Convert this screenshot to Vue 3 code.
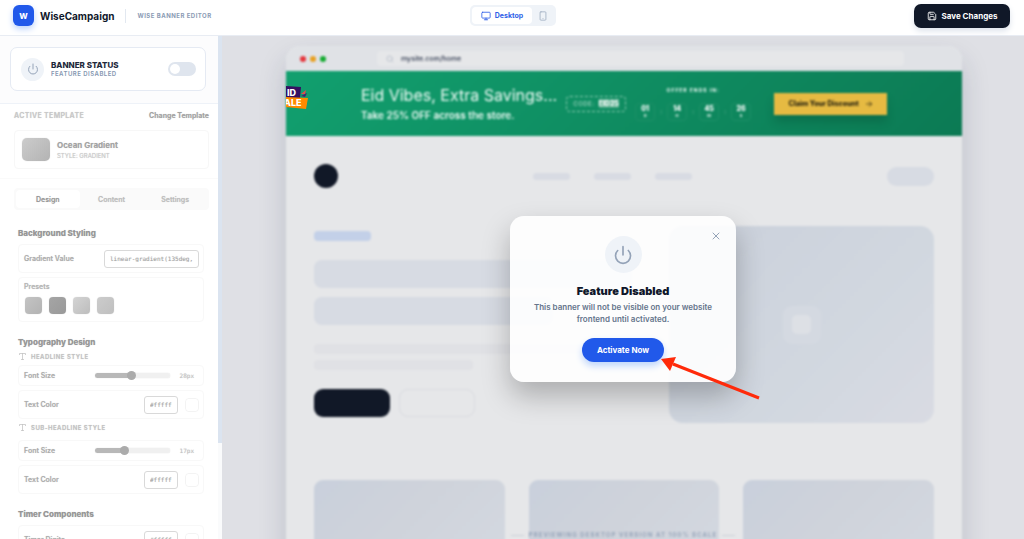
<script setup>
import { ref } from 'vue'

const enabled = ref(false)
const tab = ref('Design')
const tabs = ['Design', 'Content', 'Settings']
const gradient = ref('linear-gradient(135deg, #10b981, #047857)')
const presets = ['one', 'two', 'three', 'four']
const groups = ref([
  { id: 'headline', name: 'Headline Style', size: 28, percent: 48, color: '#ffffff' },
  { id: 'sub', name: 'Sub-headline Style', size: 17, percent: 38, color: '#ffffff' },
])
const digits = ref('#ffffff')
const timer = [
  { value: '01', unit: 'D' },
  { value: '14', unit: 'H' },
  { value: '45', unit: 'M' },
  { value: '26', unit: 'S' },
]
</script>

<template>
  <div class="app">
    <header class="topbar">
      <div class="brand">
        <span class="logo">W</span>
        <strong class="brand-name">WiseCampaign</strong>
        <span class="brand-sub">WISE BANNER EDITOR</span>
      </div>
      <div class="devices">
        <button class="device active" type="button">
          <svg viewBox="0 0 24 24" class="i10"><rect x="2" y="3" width="20" height="14" rx="2" /><path d="M8 21h8M12 17v4" /></svg>
          Desktop
        </button>
        <button class="device" type="button" aria-label="Mobile">
          <svg viewBox="0 0 24 24" class="i10"><rect x="5" y="2" width="14" height="20" rx="2" /><path d="M12 18h.01" /></svg>
        </button>
      </div>
      <button class="save" type="button">
        <svg viewBox="0 0 24 24" class="i10"><path d="M15.2 3a2 2 0 0 1 1.4.6l3.8 3.8a2 2 0 0 1 .6 1.4V19a2 2 0 0 1-2 2H5a2 2 0 0 1-2-2V5a2 2 0 0 1 2-2z" /><path d="M17 21v-7a1 1 0 0 0-1-1H8a1 1 0 0 0-1 1v7M7 3v4a1 1 0 0 0 1 1h7" /></svg>
        Save Changes
      </button>
    </header>

    <div class="workspace">
      <aside class="sidebar">
        <div class="sidebar-body">
          <section class="status-wrap">
            <div class="status">
              <span class="status-icon">
                <svg viewBox="0 0 24 24" class="i12"><path d="M12 2v10M18.4 6.6a9 9 0 1 1-12.77.04" /></svg>
              </span>
              <label class="status-text" for="status">
                <strong>BANNER STATUS</strong>
                <span>FEATURE DISABLED</span>
              </label>
              <input id="status" v-model="enabled" class="toggle" type="checkbox" />
            </div>
          </section>

          <div class="panel">
            <section class="template">
              <div class="template-head">
                <span class="caps">ACTIVE TEMPLATE</span>
                <button class="change" type="button">Change Template</button>
              </div>
              <div class="template-card">
                <span class="thumb"></span>
                <div class="template-info">
                  <strong>Ocean Gradient</strong>
                  <span>STYLE: GRADIENT</span>
                </div>
              </div>
            </section>

            <div class="tabs">
              <button v-for="t in tabs" :key="t" type="button" :class="{ active: t === tab }" @click="tab = t">{{ t }}</button>
            </div>

            <section class="group">
              <h3>Background Styling</h3>
              <div class="row tall first">
                <label for="gradient">Gradient Value</label>
                <input id="gradient" v-model="gradient" class="text wide" type="text" />
              </div>
              <div class="presets">
                <span>Presets</span>
                <div class="preset-list">
                  <button v-for="p in presets" :key="p" type="button" :class="['preset', p]" :aria-label="'Preset ' + p"></button>
                </div>
              </div>
            </section>

            <section class="group typography">
              <h3>Typography Design</h3>
              <div v-for="g in groups" :key="g.id" class="style-block">
                <h4>
                  <svg viewBox="0 0 24 24" class="i9"><path d="M4 7V4h16v3M9 20h6M12 4v16" /></svg>
                  {{ g.name }}
                </h4>
                <div class="row short">
                  <label :for="g.id + '-size'">Font Size</label>
                  <input :id="g.id + '-size'" v-model="g.percent" class="range" type="range" min="0" max="100" :style="{ '--fill': g.percent + '%' }" />
                  <output>{{ g.size }}px</output>
                </div>
                <div class="row tall">
                  <label :for="g.id + '-color'">Text Color</label>
                  <input :id="g.id + '-color'" v-model="g.color" class="text hex" type="text" />
                  <input v-model="g.color" class="swatch" type="color" :aria-label="g.name + ' color'" />
                </div>
              </div>
            </section>

            <section class="group typography">
              <h3>Timer Components</h3>
              <div class="row tall first">
                <label for="digits">Timer Digits</label>
                <input id="digits" v-model="digits" class="text hex" type="text" />
                <input v-model="digits" class="swatch" type="color" aria-label="Timer digits color" />
              </div>
            </section>
          </div>
        </div>
        <div class="scroll"><span></span></div>
      </aside>

      <main class="canvas">
        <div class="browser">
          <div class="frame">
            <div class="chrome">
              <i class="dot red"></i><i class="dot amber"></i><i class="dot green"></i>
              <div class="address">
                <svg viewBox="0 0 24 24" class="i8"><circle cx="11" cy="11" r="8" /><path d="m21 21-4.3-4.3" /></svg>
                mysite.com/home
              </div>
            </div>

            <div class="banner">
              <div class="copy">
                <div class="headline">Eid Vibes, Extra Savings...</div>
                <div class="subline">Take 25% OFF across the store.</div>
              </div>
              <div class="code">CODE: <b>EID25</b></div>
              <div class="countdown">
                <div class="ends">OFFER ENDS IN:</div>
                <div class="units">
                  <template v-for="(t, n) in timer" :key="t.unit">
                    <i v-if="n">:</i>
                    <div class="unit"><b>{{ t.value }}</b><span>{{ t.unit }}</span></div>
                  </template>
                </div>
              </div>
              <button class="claim" type="button">
                Claim Your Discount
                <svg viewBox="0 0 24 24" class="i8"><path d="M4 12h16M13 5l7 7-7 7" /></svg>
              </button>
            </div>

            <div class="site">
              <div class="site-nav">
                <span class="site-logo"></span>
                <div class="links"><i></i><i></i><i></i></div>
                <span class="site-cta"></span>
              </div>
              <div class="hero">
                <div class="hero-copy">
                  <span class="tag"></span>
                  <span class="bar"></span>
                  <span class="bar three-quarter"></span>
                  <span class="line"></span>
                  <span class="line half"></span>
                  <div class="hero-buttons"><span class="solid"></span><span class="outline"></span></div>
                </div>
                <div class="hero-image"><span><i></i></span></div>
              </div>
              <div class="cards"><span></span><span></span><span></span></div>
            </div>
          </div>

          <svg class="sticker" viewBox="0 0 24 30" role="img" aria-label="Eid sale">
            <path d="M0 1 15 2 14 13 0 13z" fill="#351062" />
            <path d="M0 12 22 13 20 24 0 22z" fill="#ff8a00" />
            <path d="m15 9 5-4-1 4z" fill="#e5484d" />
            <path d="m15 11 6-3-2 4z" fill="#4b1a72" />
            <text x="1" y="11">ID</text>
            <text x="-2" y="21">ALE</text>
          </svg>
        </div>

        <div class="caption"><span>PREVIEWING DESKTOP VERSION AT 100% SCALE</span></div>

        <div class="modal" role="dialog" aria-labelledby="modal-title">
          <button class="close" type="button" aria-label="Close">
            <svg viewBox="0 0 24 24" class="i12"><path d="M18 6 6 18M6 6l12 12" /></svg>
          </button>
          <span class="modal-icon">
            <svg viewBox="0 0 24 24" class="i20"><path d="M12 2v10M18.4 6.6a9 9 0 1 1-12.77.04" /></svg>
          </span>
          <h2 id="modal-title">Feature Disabled</h2>
          <p>This banner will not be visible on your website frontend until activated.</p>
          <button class="activate" type="button" @click="enabled = true">Activate Now</button>
          <svg class="arrow" viewBox="0 0 102 46"><path d="M99 41 13 7" stroke="#ff2a0a" stroke-width="3" stroke-linecap="butt" /><path d="M1 2 16 0 10 14z" fill="#ff2a0a" stroke="none" /></svg>
        </div>
      </main>
    </div>
  </div>
</template>

<style>
body { margin: 0; overflow: hidden; }
</style>

<style scoped>
.app { height: 100vh; display: flex; flex-direction: column; overflow: hidden; background: #fff; font-family: Inter, "Liberation Sans", sans-serif; color: #0f172a; }
.app *, .app *::before, .app *::after { box-sizing: border-box; }
button { border: 0; padding: 0; background: none; font: inherit; color: inherit; cursor: pointer; }
svg { fill: none; stroke: currentColor; stroke-width: 2; stroke-linecap: round; stroke-linejoin: round; flex: none; }
.i8 { width: 8px; height: 8px; }
.i9 { width: 9px; height: 9px; }
.i10 { width: 10px; height: 10px; }
.i12 { width: 12px; height: 12px; }
.i20 { width: 20px; height: 20px; }

.topbar { flex: none; height: 36px; padding: 0 14px 4px 16px; display: grid; grid-template-columns: 1fr auto 1fr; align-items: center; border-bottom: 1px solid #e8ecf3; }
.brand { display: flex; align-items: center; margin-left: -3px; }
.logo { width: 21px; height: 21px; border-radius: 6px; background: #2159ea; color: #fff; font-size: 8px; font-weight: 800; display: grid; place-items: center; box-shadow: 0 3px 6px #bcd3fb; }
.brand-name { margin-left: 6px; font-size: 10px; font-weight: 700; }
.brand-sub { margin-left: 11px; padding-left: 11px; border-left: 1px solid #e2e8f0; line-height: 14px; font-size: 6px; font-weight: 700; letter-spacing: 0.08em; color: #8b9bb4; }
.devices { display: flex; height: 21px; padding: 2px; border-radius: 5px; background: #eff3f8; }
.device { width: 22px; display: flex; align-items: center; justify-content: center; gap: 4px; border-radius: 4px; color: #a0aec2; font-size: 7px; font-weight: 700; }
.device.active { width: 60px; padding: 0 6px; color: #2f5fe8; background: #fff; }
.save { justify-self: end; width: 96px; height: 24px; border-radius: 7px; background: #101828; color: #fff; font-size: 8px; font-weight: 700; display: flex; align-items: center; justify-content: center; gap: 5px; box-shadow: 0 3px 6px #dde3ec; }

.workspace { flex: 1; min-height: 0; display: flex; }
.sidebar { flex: none; width: 222px; display: flex; overflow: hidden; background: #fff; }
.sidebar-body { flex: 1; min-width: 0; }
.scroll { width: 4px; background: #fafbfc; }
.scroll span { display: block; height: 81%; background: #dbe4f0; }
.status-wrap { padding: 11px 12px 12px 10px; background: #fcfcfd; border-bottom: 1px solid #eef2f8; }
.status { height: 44px; padding: 0 9px 0 10px; display: flex; align-items: center; gap: 7px; border: 1px solid #e5eaf3; border-radius: 7px; background: #fff; }
.status-icon { width: 23px; height: 23px; border-radius: 50%; display: grid; place-items: center; background: #eff3f8; color: #94a3b8; }
.status-text { flex: 1; display: flex; flex-direction: column; }
.status-text strong { font-size: 8px; line-height: 10px; font-weight: 800; color: #1e293b; }
.status-text span { font-size: 6px; line-height: 8px; font-weight: 600; letter-spacing: 0.08em; color: #8496b0; }
.toggle { appearance: none; margin: 0; width: 28px; height: 14px; border-radius: 7px; padding: 2px; background: #dfe5ee; }
.toggle::before { content: ""; display: block; width: 10px; height: 10px; border-radius: 50%; background: #fff; }
.toggle:checked { background: #2159ea; }
.toggle:checked::before { margin-left: 14px; }

.panel { color: #a3a3a3; text-shadow: 0 0 1px #d0d0d0; }
.template { padding: 7px 9px 9px 14px; border-bottom: 1px solid #fafafa; }
.template-head { height: 9px; display: flex; justify-content: space-between; align-items: center; }
.caps { font-size: 7px; line-height: 9px; font-weight: 600; color: #c8c8c8; letter-spacing: 0.05em; }
.change { font-size: 7px; line-height: 9px; font-weight: 700; text-shadow: inherit; }
.template-card { margin-top: 10px; height: 39px; padding: 0 7px; display: flex; align-items: center; gap: 7px; border: 1px solid #f7f7f7; border-radius: 4px; }
.thumb { width: 28px; height: 23px; border-radius: 5px; background: linear-gradient(135deg, #ccc, #b3b3b3); box-shadow: 0 0 1px #ccc; }
.template-info { display: flex; flex-direction: column; }
.template-info strong { font-size: 8px; line-height: 11px; font-weight: 700; }
.template-info span { font-size: 6px; line-height: 9px; color: #cacaca; }
.tabs { margin: 9px 9px 0 14px; height: 22px; padding: 2px; display: flex; border-radius: 4px; background: #fafafa; }
.tabs button { flex: 1; border-radius: 4px; font-size: 7px; font-weight: 600; color: #bdbdbd; text-shadow: inherit; }
.tabs .active { background: #fff; color: #969696; }
.group { margin: 18px 14px 0 18px; }
.group h3 { margin: 0; font-size: 8px; line-height: 11px; font-weight: 800; color: #969696; }
.row { padding: 0 4px 0 5px; display: flex; align-items: center; border: 1px solid #f8f8f8; border-radius: 4px; margin-top: 4px; font-size: 7px; font-weight: 600; color: #adadad; }
.row.first { margin-top: 5px; }
.row label { flex: 1; }
.tall { height: 29px; }
.short { height: 21px; }
.text { height: 18px; padding: 0 5px; border: 1px solid #d9d9d9; border-radius: 3px; background: #fff; outline: 0; font: 6px "DejaVu Sans Mono", monospace; color: #a3a3a3; text-shadow: inherit; }
.wide { width: 95px; }
.hex { width: 34px; }
.swatch { appearance: none; width: 14px; height: 14px; margin-left: 7px; padding: 0; border: 1px solid #f3f3f3; border-radius: 4px; background: #fff; }
.swatch::-webkit-color-swatch-wrapper { padding: 0; }
.swatch::-webkit-color-swatch { border: 0; border-radius: 3px; }
.presets { height: 45px; margin-top: 4px; padding: 4px 5px; border: 1px solid #f8f8f8; border-radius: 4px; font-size: 7px; line-height: 9px; font-weight: 600; color: #b5b5b5; }
.presets > span { display: block; }
.preset-list { display: flex; gap: 7px; padding: 6px 1px 0; }
.preset { width: 17px; height: 17px; border-radius: 4px; box-shadow: 0 0 1px #ccc; }
.one { background: linear-gradient(135deg, #c4c4c4, #b3b3b3); }
.two { background: linear-gradient(135deg, #a5a5a5, #999); }
.three { background: linear-gradient(135deg, #d4d4d4, #bdbdbd); }
.four { background: linear-gradient(135deg, #ccc, #bfbfbf); }
.typography { margin-top: 15px; }
.style-block h4 { margin: 4px 0 0; height: 9px; display: flex; align-items: center; gap: 4px; font-size: 6px; font-weight: 600; letter-spacing: 0.08em; text-transform: uppercase; color: #c2c2c2; }
.style-block + .style-block .short { margin-top: 8px; }
.range { appearance: none; width: 75px; height: 9px; margin: 0; background: none; }
.range::-webkit-slider-runnable-track { height: 5px; border-radius: 3px; background: linear-gradient(90deg, #b8b8b8 var(--fill), #f0f0f0 var(--fill)); box-shadow: 0 0 1px #ccc; }
.range::-webkit-slider-thumb { appearance: none; width: 9px; height: 9px; margin-top: -2px; border-radius: 50%; background: #ababab; }
.row output { width: 29px; padding-right: 5px; text-align: right; font: 6px "DejaVu Sans Mono", monospace; color: #c2c2c2; }

.canvas { position: relative; flex: 1; min-width: 0; padding: 10px 62px 0 64px; overflow: hidden; background: #dfe0e5; }
.browser { position: relative; height: 100%; }
.frame { min-height: 100%; border-radius: 14px 14px 0 0; background: #e6e7e9; box-shadow: 0 14px 28px rgba(30, 41, 70, 0.18); filter: blur(1px); overflow: hidden; }
.chrome { height: 25px; padding: 0 58px 0 14px; display: flex; align-items: center; gap: 4px; background: #e0e2e6; }
.dot { width: 6px; height: 6px; border-radius: 50%; }
.red { background: #e5353b; }
.amber { background: #e8a020; }
.green { background: #14ab30; }
.address { flex: 1; height: 15px; margin-left: 47px; padding-left: 9px; display: flex; align-items: center; gap: 7px; border-radius: 4px; background: #e6e7e9; font-size: 7px; font-weight: 500; color: #303a50; }
.address svg { color: #aab3c2; }
.banner { height: 65px; display: flex; align-items: center; justify-content: center; background: linear-gradient(135deg, #12a06f, #0c7a54); color: #eefaf5; }
.copy { margin-right: 9px; }
.headline { font-size: 16px; line-height: 22px; white-space: nowrap; }
.subline { font-size: 10px; line-height: 18px; font-weight: 600; white-space: nowrap; }
.code { width: 60px; height: 16px; margin-right: 9px; display: flex; align-items: center; justify-content: center; gap: 4px; border: 1px dashed #8acbb1; border-radius: 4px; font-size: 6px; font-weight: 600; letter-spacing: 0.08em; color: #93cfb8; }
.code b { letter-spacing: 0; font-size: 7px; font-weight: 800; color: #fff; background: #55ac8b; }
.countdown { width: 116px; margin-right: 23px; display: flex; flex-direction: column; align-items: center; gap: 9px; }
.ends { font-size: 5px; line-height: 7px; font-weight: 700; letter-spacing: 0.2em; }
.units { align-self: stretch; display: flex; align-items: center; justify-content: space-between; }
.units i { font-size: 6px; font-style: normal; color: #80c0a7; }
.unit { width: 20px; height: 18px; display: flex; flex-direction: column; align-items: center; justify-content: center; border: 1px solid #1c9067; border-radius: 4px; }
.unit b { font-size: 7px; line-height: 8px; font-weight: 800; color: #fff; }
.unit span { font-size: 4px; line-height: 6px; font-weight: 600; }
.claim { width: 113px; height: 22px; display: flex; align-items: center; justify-content: center; gap: 6px; background: #e6ba42; color: #1f1d10; font-size: 7px; font-weight: 800; box-shadow: 0 7px 10px rgba(0, 50, 30, 0.22); }

.site { padding: 28px; }
.site-nav { height: 24px; display: flex; align-items: center; justify-content: space-between; }
.site-logo { width: 24px; height: 24px; border-radius: 50%; background: #111827; }
.links { display: flex; gap: 24px; }
.links i { width: 37px; height: 7px; border-radius: 4px; background: #d8dbe3; }
.site-cta { width: 47px; height: 19px; border-radius: 10px; background: #d7dbe3; }
.hero { margin-top: 38px; display: grid; grid-template-columns: 6fr 5fr; gap: 37px; }
.hero-copy { padding-top: 5px; display: flex; flex-direction: column; }
.tag { width: 57px; height: 10px; margin-bottom: 19px; border-radius: 4px; background: #c3d0e8; }
.bar { height: 28px; margin-bottom: 9px; border-radius: 8px; background: #d7dbe3; }
.three-quarter { width: 75%; }
.line { height: 10px; margin-top: 10px; border-radius: 4px; background: #e0e1e5; }
.half { width: 50%; margin-top: 6px; }
.hero-buttons { margin-top: 19px; display: flex; gap: 9px; }
.solid, .outline { width: 76px; height: 28px; border-radius: 9px; }
.solid { background: #111827; }
.outline { border: 1px solid #d9dbe0; }
.hero-image { height: 197px; border-radius: 14px; display: grid; place-items: center; background: linear-gradient(135deg, #cad0db, #d2d8e0 65%, #d9dbe3); }
.hero-image span { width: 38px; height: 38px; border-radius: 9px; display: grid; place-items: center; background: #d4d9e1; }
.hero-image i { width: 19px; height: 19px; border-radius: 5px; background: #dde0e5; }
.cards { margin-top: 57px; display: grid; grid-template-columns: repeat(3, 1fr); gap: 24px; }
.cards span { height: 120px; border-radius: 9px; background: linear-gradient(135deg, #c9d0dc, #cfd3db 40%, #d5dae2); }

.sticker { position: absolute; left: 0; top: 39px; width: 24px; height: 30px; stroke: none; overflow: hidden; }
.sticker text { fill: #fff; font-size: 9px; font-weight: 800; }
.caption { position: absolute; left: 0; right: 0; bottom: 0; display: flex; align-items: center; justify-content: center; gap: 5px; font-size: 6px; line-height: 8px; font-weight: 700; letter-spacing: 0.18em; color: #94a3b8; filter: blur(1px); }
.caption::before, .caption::after { content: ""; width: 13px; height: 1px; background: #ccd0d8; }

.modal { position: absolute; left: 0; right: 0; top: 180px; margin: 0 auto; width: 226px; min-height: 166px; padding: 20px 18px 19px; display: flex; flex-direction: column; align-items: center; border-radius: 14px; background: rgba(255, 255, 255, 0.9); box-shadow: 0 14px 28px rgba(0, 0, 0, 0.25); text-align: center; }
.close { position: absolute; right: 14px; top: 14px; height: 12px; line-height: 0; color: #94a3b8; }
.close svg { display: block; }
.modal-icon { width: 37px; height: 37px; border-radius: 50%; display: grid; place-items: center; background: #eff3f8; color: #94a3b8; }
.modal h2 { margin: 10px 0 2px; font-size: 11px; line-height: 16px; font-weight: 900; }
.modal p { margin: 0; font-size: 8px; line-height: 12px; font-weight: 600; color: #64748b; }
.activate { width: 82px; height: 24px; margin-top: 13px; border-radius: 12px; background: #2159ea; color: #fff; font-size: 8px; font-weight: 700; box-shadow: 0 4px 7px #bfd6fb; }
.arrow { position: absolute; left: 150px; top: 141px; width: 102px; height: 46px; }
</style>
